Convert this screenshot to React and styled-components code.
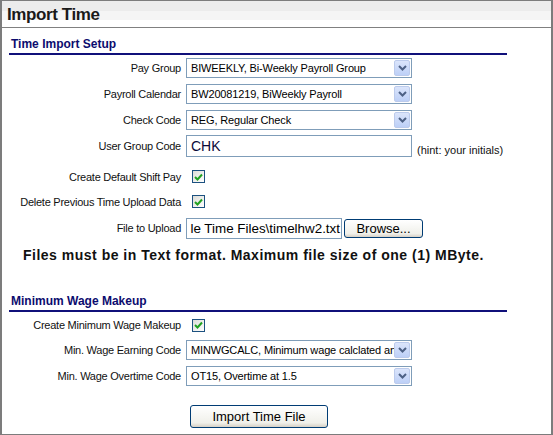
import styled, { createGlobalStyle } from 'styled-components';

const GlobalStyle = createGlobalStyle`
	html, body {
		margin: 0;
		padding: 0;
		background: #fff;
	}
	* {
		box-sizing: border-box;
	}
`;

const setupRows = [
	{ label: 'Pay Group', value: 'BIWEEKLY, Bi-Weekly Payroll Group' },
	{ label: 'Payroll Calendar', value: 'BW20081219, BiWeekly Payroll' },
	{ label: 'Check Code', value: 'REG, Regular Check' },
];

const Check = () => (
	<CheckBox>
		<svg width='9' height='8' viewBox='0 0 9 8'>
			<path d='M1 4 L3.5 6.5 L8 1.5' stroke='#21a121' strokeWidth='2' fill='none' />
		</svg>
	</CheckBox>
);

const Select = ({ value }) => (
	<SelectBox>
		<SelectText>{value}</SelectText>
		<SelectArrow>
			<svg width='9' height='6' viewBox='0 0 9 6'>
				<path d='M1 1 L4.5 4.5 L8 1' stroke='#4d6185' strokeWidth='2' fill='none' />
			</svg>
		</SelectArrow>
	</SelectBox>
);

function App() {
	return (
		<>
			<GlobalStyle />
			<Panel>
				<Header>Import Time</Header>

				<SectionTitle top={8}>Time Import Setup</SectionTitle>
				<Rows>
					{setupRows.map((r) => (
						<Row key={r.label}>
							<Label>{r.label}</Label>
							<Select value={r.value} />
						</Row>
					))}
					<Row>
						<Label>User Group Code</Label>
						<Control>
							<TextInput>CHK</TextInput>
							<Hint>(hint: your initials)</Hint>
						</Control>
					</Row>
					<Row top={5} h={25}>
						<Label>Create Default Shift Pay</Label>
						<Check />
					</Row>
					<Row h={25}>
						<Label>Delete Previous Time Upload Data</Label>
						<Check />
					</Row>
					<Row h={28}>
						<Label>File to Upload</Label>
						<Control>
							<FileInput>
								<span>le Time Files\timelhw2.txt</span>
							</FileInput>
							<BrowseBtn>Browse...</BrowseBtn>
						</Control>
					</Row>
				</Rows>
				<Warning>Files must be in Text format. Maximum file size of one (1) MByte.</Warning>

				<SectionTitle top={28}>Minimum Wage Makeup</SectionTitle>
				<Rows>
					<Row top={1} h={24}>
						<Label>Create Minimum Wage Makeup</Label>
						<Check />
					</Row>
					<Row>
						<Label>Min. Wage Earning Code</Label>
						<Select value='MINWGCALC, Minimum wage calclated and' />
					</Row>
					<Row>
						<Label>Min. Wage Overtime Code</Label>
						<Select value='OT15, Overtime at 1.5' />
					</Row>
				</Rows>
				<Footer>
					<ImportBtn>Import Time File</ImportBtn>
				</Footer>
			</Panel>
		</>
	);
}

const Panel = styled.div`
	width: 553px;
	height: 435px;
	border: 1px solid #7c7c7c;
	border-left-width: 2px;
	border-right-width: 2px;
	font-family: 'Liberation Sans', Arial, sans-serif;
	color: #000;
	overflow: hidden;
`;

const Header = styled.div`
	height: 27px;
	padding: 4px 0 0 5px;
	font: bold 17px/20px 'Liberation Sans', Arial, sans-serif;
	letter-spacing: -0.4px;
	color: #1a1a1a;
	background: linear-gradient(to bottom, #ececec 0, #ececec 10px, #f5f5f5 10px, #f5f5f5 19px, #fff 19px);
	border-bottom: 1px solid #808080;
`;

const SectionTitle = styled.div`
	margin: ${(p) => p.top}px 0 0 7px;
	width: 498px;
	padding: 0 0 1px 2px;
	font: bold 12px/16px 'Liberation Sans', Arial, sans-serif;
	color: #0c0c6e;
	border-bottom: 2px solid #10107a;
`;

const Rows = styled.div`
	display: flex;
	flex-direction: column;
`;

const Row = styled.div`
	display: grid;
	grid-template-columns: 179px 1fr;
	column-gap: 5px;
	align-items: center;
	height: ${(p) => p.h || 26}px;
	margin-top: ${(p) => p.top || 0}px;
`;

const Label = styled.div`
	text-align: right;
	font-size: 11px;
	letter-spacing: -0.25px;
	color: #111;
	white-space: nowrap;
`;

const Control = styled.div`
	display: flex;
	align-items: center;
	gap: 5px;
`;

const SelectBox = styled.div`
	width: 226px;
	height: 20px;
	border: 1px solid #7f9db9;
	background: #fff;
	display: flex;
	align-items: center;
	padding: 0 1px 0 4px;
`;

const SelectText = styled.div`
	flex: 1;
	font-size: 11px;
	letter-spacing: -0.15px;
	white-space: nowrap;
	overflow: hidden;
`;

const SelectArrow = styled.div`
	width: 16px;
	height: 16px;
	flex-shrink: 0;
	border: 1px solid #bccbec;
	border-radius: 2px;
	background: linear-gradient(to bottom, #dbe5fb, #bdd0f7);
	display: flex;
	align-items: center;
	justify-content: center;
`;

const TextInput = styled.div`
	width: 226px;
	height: 22px;
	border: 1px solid #7f9db9;
	padding: 1px 4px;
	font-size: 14px;
	line-height: 18px;
	color: #0a0a3a;
`;

const Hint = styled.span`
	font-size: 11px;
	color: #111;
	margin-top: 7px;
`;

const CheckBox = styled.div`
	width: 13px;
	height: 13px;
	margin-left: 6px;
	border: 1px solid #1c5180;
	background: linear-gradient(135deg, #dcdcd7, #fff);
	display: flex;
	align-items: center;
	justify-content: center;
`;

const FileInput = styled.div`
	width: 156px;
	height: 21px;
	border: 1px solid #7f9db9;
	font-size: 13.4px;
	line-height: 19px;
	white-space: nowrap;
	overflow: hidden;
	display: flex;
	justify-content: flex-end;
	padding-right: 1px;
	margin-right: -3px;

	span {
		flex-shrink: 0;
	}
`;

const BrowseBtn = styled.div`
	width: 79px;
	height: 19px;
	border: 1px solid #003c74;
	border-radius: 3px;
	background: linear-gradient(to bottom, #fff, #f0f0ea 80%, #d6d0c5);
	font-size: 13px;
	line-height: 17px;
	text-align: center;
`;

const Warning = styled.div`
	margin-top: 3px;
	padding-left: 21px;
	font: bold 14px/20px 'Liberation Sans', Arial, sans-serif;
	letter-spacing: 0.5px;
	color: #111;
	white-space: nowrap;
`;

const Footer = styled.div`
	padding: 16px 0 0 188px;
`;

const ImportBtn = styled.div`
	width: 138px;
	height: 23px;
	border: 1px solid #003c74;
	border-radius: 3px;
	background: linear-gradient(to bottom, #fff, #f0f0ea 80%, #d6d0c5);
	font-size: 13px;
	line-height: 21px;
	text-align: center;
`;

export default App;
